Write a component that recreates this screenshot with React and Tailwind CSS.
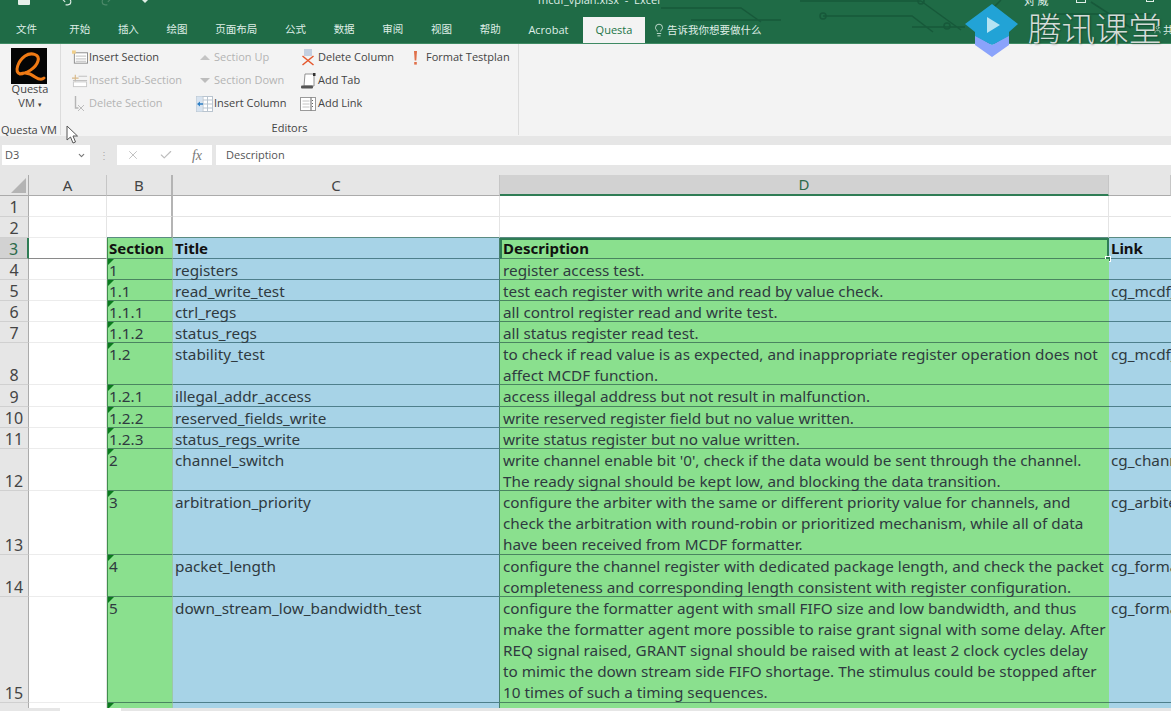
import { Lightbulb, ChevronDown, X, Check, Undo2, Redo2, User } from "lucide-react";

const tabs = ["开始", "插入", "绘图", "页面布局", "公式", "数据", "审阅", "视图", "帮助", "Acrobat"];

const rows = [
  { n: "1", h: "h-[21px]" },
  { n: "2", h: "h-[21px]" },
  { n: "3", h: "h-[21px]", active: true, head: true, b: "Section", c: "Title", d: "Description", e: "Link" },
  { n: "4", h: "h-[21px]", b: "1", c: "registers", d: ["register access test."] },
  { n: "5", h: "h-[21px]", b: "1.1", c: "read_write_test", d: ["test each register with write and read by value check."], e: "cg_mcdf_regs" },
  { n: "6", h: "h-[21px]", b: "1.1.1", c: "ctrl_regs", d: ["all control register read and write test."] },
  { n: "7", h: "h-[21px]", b: "1.1.2", c: "status_regs", d: ["all status register read test."] },
  { n: "8", h: "h-[42px]", b: "1.2", c: "stability_test", d: ["to check if read value is as expected, and inappropriate register operation does not", "affect MCDF function."], e: "cg_mcdf_regs" },
  { n: "9", h: "h-[22px]", b: "1.2.1", c: "illegal_addr_access", d: ["access illegal address but not result in malfunction."] },
  { n: "10", h: "h-[21px]", b: "1.2.2", c: "reserved_fields_write", d: ["write reserved register field but no value written."] },
  { n: "11", h: "h-[21px]", b: "1.2.3", c: "status_regs_write", d: ["write status register but no value written."] },
  { n: "12", h: "h-[42px]", b: "2", c: "channel_switch", d: ["write channel enable bit '0', check if the data would be sent through the channel.", "The ready signal should be kept low, and blocking the data transition."], e: "cg_channel" },
  { n: "13", h: "h-[64px]", b: "3", c: "arbitration_priority", d: ["configure the arbiter with the same or different priority value for channels, and", "check the arbitration with round-robin or prioritized mechanism, while all of data", "have been received from MCDF formatter."], e: "cg_arbiter" },
  { n: "14", h: "h-[42px]", b: "4", c: "packet_length", d: ["configure the channel register with dedicated package length, and check the packet", "completeness and corresponding length consistent with register configuration."], e: "cg_formatter" },
  { n: "15", h: "h-[106px]", b: "5", c: "down_stream_low_bandwidth_test", d: ["configure the formatter agent with small FIFO size and low bandwidth, and thus", "make the formatter agent more possible to raise grant signal with some delay. After", "REQ signal raised, GRANT signal should be raised with at least 2 clock cycles delay", "to mimic the down stream side FIFO shortage. The stimulus could be stopped after", "10 times of such a timing sequences."], e: "cg_formatter" },
  { n: "", h: "h-[21px]", tail: true, b: "" },
];

function Corner() {
  return <span className="absolute left-0 top-0 w-0 h-0 border-t-[6px] border-t-[#0b7a1e] border-r-[6px] border-r-transparent" />;
}

function QuestaLogo() {
  return (
    <svg width="36" height="36" viewBox="0 0 36 36" className="block">
      <rect width="36" height="36" fill="#050505" />
      <path d="M9 26 C3 24 7 13 14 8 C20 4 29 6 27 13 C25 20 15 26 9 26 C14 24 19 25 24 29 C27 31 31 32 33 30" fill="none" stroke="#f07a14" strokeWidth="3" strokeLinecap="round" />
    </svg>
  );
}

function InsertSectionIcon() {
  return (
    <svg width="16" height="15" viewBox="0 0 17 15">
      <rect x="2.5" y="2.5" width="14" height="11" fill="#fff" stroke="#8a8a8a" />
      <path d="M4 6h11M4 9h11M4 11.5h11" stroke="#bbb" />
      <rect x="0" y="0" width="4" height="3.5" fill="#f0cf8a" />
    </svg>
  );
}

function InsertSubIcon() {
  return (
    <svg width="16" height="15" viewBox="0 0 17 15">
      <path d="M0 5h7M3.5 1.5v7" stroke="#d8b98a" strokeWidth="1.2" />
      <path d="M7 3h9M1 7.5h15" stroke="#bdbdbd" />
      <rect x="1.5" y="9" width="14" height="5" fill="#fff" stroke="#c8c8c8" />
    </svg>
  );
}

function DeleteSectionIcon() {
  return (
    <svg width="12" height="16" viewBox="0 0 12 16">
      <path d="M1.5 0v12h3" fill="none" stroke="#b5b5b5" strokeWidth="1.4" />
      <path d="M4 9l6 6M10 9l-6 6" stroke="#bcbcbc" />
    </svg>
  );
}

function InsertColumnIcon() {
  return (
    <svg width="17" height="16" viewBox="0 0 17 16">
      <rect x="0.5" y="0.5" width="16" height="15" fill="#fff" stroke="#b9c4cf" />
      <rect x="0.5" y="0.5" width="6" height="15" fill="#d7e3f0" />
      <path d="M7 .5v15M11.5 .5v15M7 4h10M7 8h10M7 12h10" stroke="#b9c4cf" />
      <path d="M1 8l3-2.5v5zM4 7.2h3v1.6h-3z" fill="#2f7fc4" />
    </svg>
  );
}

function DeleteColumnIcon() {
  return (
    <svg width="14" height="17" viewBox="0 0 14 17">
      <rect x="3" y="0" width="8" height="7" fill="#c3cfe0" />
      <path d="M1.5 7l11 9M12.5 7l-11 9" stroke="#e5572c" strokeWidth="1.5" />
    </svg>
  );
}

function AddTabIcon() {
  return (
    <svg width="15" height="16" viewBox="0 0 15 16">
      <path d="M4 1h8l1 2v10H3z" fill="#fff" stroke="#777" strokeWidth="0.8" />
      <rect x="12" y="0" width="2.5" height="3" fill="#333" />
      <rect x="0" y="12.5" width="12" height="3" rx="1" fill="#555" />
    </svg>
  );
}

function AddLinkIcon() {
  return (
    <svg width="16" height="14" viewBox="0 0 16 14">
      <rect x="0.5" y="0.5" width="15" height="13" fill="#fff" stroke="#9a9a9a" />
      <path d="M2.5 4h7M2.5 7h7M2.5 10h7" stroke="#c4c4c4" />
      <path d="M12.5 3v1M12.5 6v1M12.5 9v1M11 .5v13" stroke="#666" />
    </svg>
  );
}

function BangIcon() {
  return (
    <svg width="5" height="14" viewBox="0 0 5 14">
      <path d="M1 0h3l-.7 9.5h-1.6z" fill="#e0704a" />
      <rect x="1.2" y="11" width="2.6" height="2.6" fill="#e0704a" />
    </svg>
  );
}

function Cmd({ icon, label, off, iconBox = "w-[19px]" }) {
  return (
    <div className="flex items-center h-[23px]">
      <span className={`${iconBox} flex justify-center items-center shrink-0`}>{icon}</span>
      <span className={off ? "text-[#b3b3b3]" : "text-[#444]"}>{label}</span>
    </div>
  );
}

function Ribbon() {
  return (
    <div className="h-[92px] bg-[#f3f3f3] flex font-['Open_Sans',sans-serif] text-[11px] shrink-0">
      <div className="w-[61px] border-r border-[#dcdcdc] flex flex-col items-center text-[#444] mb-[1px]">
        <div className="mt-[4px] ml-[-2px]"><QuestaLogo /></div>
        <div className="leading-[14px] mt-[-2px] text-center">Questa<br />VM <span className="text-[7px]">▾</span></div>
        <div className="mt-[11px] ml-[-2px] leading-[13px] whitespace-nowrap">Questa VM</div>
      </div>
      <div className="w-[458px] border-r border-[#dcdcdc] flex flex-col mb-[1px]">
        <div className="flex pt-[2px] h-[70px]">
          <div className="w-[128px] pl-[9px] shrink-0">
            <Cmd icon={<InsertSectionIcon />} label="Insert Section" />
            <Cmd icon={<InsertSubIcon />} label="Insert Sub-Section" off />
            <Cmd icon={<DeleteSectionIcon />} label="Delete Section" off />
          </div>
          <div className="w-[104px] pl-[6px] shrink-0">
            <Cmd icon={<span className="w-0 h-0 border-l-[5px] border-r-[5px] border-b-[5px] border-l-transparent border-r-transparent border-b-[#c4c4c4]" />} label="Section Up" off />
            <Cmd icon={<span className="w-0 h-0 border-l-[5px] border-r-[5px] border-t-[5px] border-l-transparent border-r-transparent border-t-[#bdbdbd]" />} label="Section Down" off />
            <Cmd icon={<InsertColumnIcon />} label="Insert Column" />
          </div>
          <div className="w-[105px] shrink-0">
            <Cmd iconBox="w-[25px] pl-[5px]" icon={<DeleteColumnIcon />} label="Delete Column" />
            <Cmd iconBox="w-[25px] pl-[5px]" icon={<AddTabIcon />} label="Add Tab" />
            <Cmd iconBox="w-[25px] pl-[5px]" icon={<AddLinkIcon />} label="Add Link" />
          </div>
          <div className="w-[120px]">
            <Cmd iconBox="w-[28px] pl-[6px]" icon={<BangIcon />} label="Format Testplan" />
          </div>
        </div>
        <div className="text-center text-[#444] mt-[7px] leading-[13px]">Editors</div>
      </div>
    </div>
  );
}

function FormulaBar() {
  return (
    <div className="h-[39px] bg-[#e6e6e6] flex items-start pt-[9px] shrink-0 font-['Open_Sans',sans-serif] text-[#555]">
      <div className="ml-[2px] w-[88px] h-[20px] bg-white flex items-center justify-between pl-[3px] pr-[3px] text-[11px]">
        <span>D3</span>
        <ChevronDown size={9} strokeWidth={3} className="text-[#777] mr-[1px]" />
      </div>
      <div className="w-[27px] h-[20px] flex items-center justify-center text-[#aaa] text-[10px] leading-none">⋮</div>
      <div className="w-[95px] h-[20px] bg-white flex items-center justify-between pl-[9px] pr-[10px] text-[#bdbdbd]">
        <X size={14} strokeWidth={1.6} />
        <Check size={14} strokeWidth={2} />
        <span className="font-['Liberation_Serif',serif] italic text-[#777] text-[14px]">fx</span>
      </div>
      <div className="ml-[4px] flex-1 h-[20px] bg-white flex items-center pl-[10px] text-[11px]">Description</div>
    </div>
  );
}

function ColHead({ label, on, edge }) {
  return (
    <div className={`h-[21px] flex items-center justify-center text-[15px] border-b ${on ? "bg-[#d2d2d2] border-b-[#2f7d55] border-b-2 text-[#2c6a4a]" : "bg-[#e6e6e6] border-b-[#ababab] text-[#444]"} ${edge ? "border-r-2 border-r-[#b4b4b4]" : "border-r border-r-[#c6c6c6]"}`}>
      {label}
    </div>
  );
}

function SheetRow({ r }) {
  const filled = r.b !== undefined;
  const line = r.n === "2" ? "border-b-[#5b8b82]" : "border-b-[#e4e4e4]";
  const bold = r.head ? "font-bold text-[#111] text-[15px] leading-[20px]" : "text-[#2f3a40] pt-[1px] leading-[21px]";
  return (
    <>
      <div className={`${r.h} relative flex items-end justify-center text-[16px] leading-[17px] border-r border-b ${r.active ? "bg-[#d2d2d2] text-[#2c6a4a] border-r-[#2f7d55] border-r-2 border-b-[#ababab]" : "bg-[#e6e6e6] text-[#444] border-r-[#ababab] border-b-[#d0d0d0]"}`}>
        {r.n}
      </div>
      <div className={`${r.h} bg-white border-r border-r-[#e4e4e4] border-b ${r.head ? "border-b-[#8a8a8a]" : "border-b-[#ececec]"}`} />
      {filled ? (
        <div className={`${r.h} relative bg-[#8ae08e] border-l border-l-[#3f8f4c] border-r border-r-[#9cc7a8] border-b border-b-[#4a8560] px-[1px] ${bold} ${r.tail ? "border-b-0" : ""}`}>
          {!r.head && <Corner />}
          {r.b}
        </div>
      ) : (
        <div className={`${r.h} bg-white border-r-2 border-r-[#b4b4b4] border-b ${line}`} />
      )}
      {filled ? (
        <div className={`${r.h} bg-[#a7d3e7] border-r border-r-[#46806a] border-b border-b-[#4e7f8c] px-[2px] whitespace-nowrap ${bold}`}>{r.c}</div>
      ) : (
        <div className={`${r.h} bg-white border-r border-r-[#e4e4e4] border-b ${line}`} />
      )}
      {filled ? (
        <div className={`${r.h} relative bg-[#8ae08e] border-b border-b-[#4a8560] px-[3px] whitespace-nowrap ${bold} ${r.head ? "border-2 border-[#2f7d55] pl-[1px]" : ""}`}>
          {r.head ? <div className="mt-[-2px]">{r.d}</div> : (r.d || []).map((line) => <div key={line}>{line}</div>)}
          {r.head && <span className="absolute right-[-4px] bottom-[-4px] w-[6px] h-[6px] bg-[#2f7d55] border border-white" />}
        </div>
      ) : (
        <div className={`${r.h} bg-white border-r border-r-[#e4e4e4] border-b ${line}`} />
      )}
      {filled ? (
        <div className={`${r.h} bg-[#a7d3e7] border-b border-b-[#4e7f8c] px-[2px] whitespace-nowrap overflow-hidden ${bold}`}>{r.e}</div>
      ) : (
        <div className={`${r.h} bg-white border-b ${line}`} />
      )}
    </>
  );
}

function Sheet() {
  return (
    <div className="flex-1 overflow-hidden bg-white font-['Noto_Sans',sans-serif] text-[15.3px]">
      <div className="grid grid-cols-[29px_78px_66px_327px_609px_1fr]">
        <div className="h-[21px] bg-[#e6e6e6] border-r border-b border-[#ababab] relative overflow-hidden">
          <span className="absolute right-[2px] bottom-[2px] w-0 h-0 border-b-[15px] border-b-[#b4b4b4] border-l-[15px] border-l-transparent" />
        </div>
        <ColHead label="A" />
        <ColHead label="B" edge />
        <ColHead label="C" />
        <ColHead label="D" on />
        <ColHead label="" />
        {rows.map((r, i) => <SheetRow key={i} r={r} />)}
      </div>
    </div>
  );
}

function Watermark() {
  return (
    <div className="absolute left-[965px] top-[3px] flex items-start pointer-events-none">
      <svg width="54" height="55" viewBox="0 0 54 55" className="block">
        <path d="M10 32 L27 42 L44 32 V42 L27 54 L10 42 Z" fill="#8aa3fb" />
        <path d="M0 21 L27 1 L53 21 L44 29 V33 L27 42 L10 33 V29 Z" fill="#22a3d6" />
        <path d="M22 14 L35 22 L22 30 Z" fill="#b5e3f2" />
      </svg>
      <span className="ml-[9px] mt-[2px] text-[33.5px] leading-[44px] whitespace-nowrap font-['Noto_Sans_CJK_SC',sans-serif] font-light text-[#d4dcd8] [text-shadow:1px_1px_2px_rgba(0,0,0,0.35)]">腾讯课堂</span>
    </div>
  );
}

export default function App() {
  return (
    <div className="relative w-[1171px] h-[711px] overflow-hidden flex flex-col bg-[#e6e6e6]">
      <div className="h-[44px] bg-[#1f6b46] shrink-0 relative border-b border-[#3e8a63] text-[#dfeee6] font-['Noto_Sans_CJK_SC','Noto_Sans',sans-serif] text-[10.5px]">
        <svg width="520" height="43" viewBox="0 0 520 43" className="absolute left-[651px] top-0">
          <g fill="none" stroke="#17593a" strokeWidth="1.5">
            <path d="M10 8 H90 L110 22 M40 20 H130 M149 1 H270 M172 16 H261 L282 32 M261 27 H314 M270 1 L310 30 M330 20 L350 0 M400 14 H500 M440 2 L480 28" />
            <circle cx="172" cy="16" r="3" />
            <circle cx="270" cy="1" r="3" />
            <circle cx="296" cy="26" r="3" />
          </g>
        </svg>
        <div className="h-[17px] relative overflow-hidden">
          <span className="absolute left-[538px] top-[-9px] leading-[18px] whitespace-nowrap font-['Open_Sans',sans-serif] text-[11px]">mcdf_vplan.xlsx&nbsp; -&nbsp; Excel</span>
          <span className="absolute left-[1024px] top-[-9px] leading-[18px] text-[11px]">对 威</span>
          <span className="absolute left-[18px] top-[-6px] w-[12px] h-[11px] bg-[#e6efe9] rounded-[1px]" />
          <Undo2 size={13} strokeWidth={2} className="absolute left-[60px] top-[-6px]" />
          <Redo2 size={13} strokeWidth={2} className="absolute left-[100px] top-[-6px] text-[#4d8a6a]" />
          <span className="absolute left-[142px] top-0 w-0 h-0 border-l-[3px] border-r-[3px] border-t-[3px] border-l-transparent border-r-transparent border-t-[#dfeee6]" />
          <span className="absolute left-[1076px] top-[-6px] w-[10px] h-[9px] border border-[#dfeee6]" />
          <span className="absolute left-[1146px] top-[-6px] w-[8px] h-[8px] border border-[#dfeee6]" />
        </div>
        <div className="flex items-stretch h-[26px]">
          <div className="flex items-center gap-[27.7px] ml-[16px] w-[552px] shrink-0 whitespace-nowrap font-['Open_Sans','Noto_Sans_CJK_SC',sans-serif]">
            <span className="mr-[4.5px]">文件</span>
            {tabs.map((t) => (
              <span key={t} className={t === "Acrobat" ? "text-[11px]" : ""}>{t}</span>
            ))}
          </div>
          <div className="ml-[15px] w-[62px] bg-[#f3f3f3] text-[#217346] flex items-center justify-center font-['Open_Sans',sans-serif] text-[11px]">Questa</div>
          <div className="ml-[7px] flex items-center whitespace-nowrap">
            <Lightbulb size={14} strokeWidth={1.4} className="mr-[1px]" />
            告诉我你想要做什么
          </div>
          <User size={9} strokeWidth={1.6} className="absolute left-[1153px] top-[25px]" />
          <span className="absolute left-[1163px] top-[22px] leading-[16px] text-[10.5px]">共</span>
        </div>
      </div>
      <Ribbon />
      <FormulaBar />
      <Sheet />
      <div className="h-[3px] bg-[#e6e6e6] shrink-0 flex pl-[60px]"><div className="w-[61px] bg-white" /></div>
      <Watermark />
      <svg width="14" height="20" viewBox="0 0 14 20" className="absolute left-[66px] top-[125px]">
        <path d="M1 1 L1 15 L4.5 12 L7 18 L9.5 17 L7 11 L11.5 11 Z" fill="#fff" stroke="#555" strokeWidth="1" />
      </svg>
    </div>
  );
}
